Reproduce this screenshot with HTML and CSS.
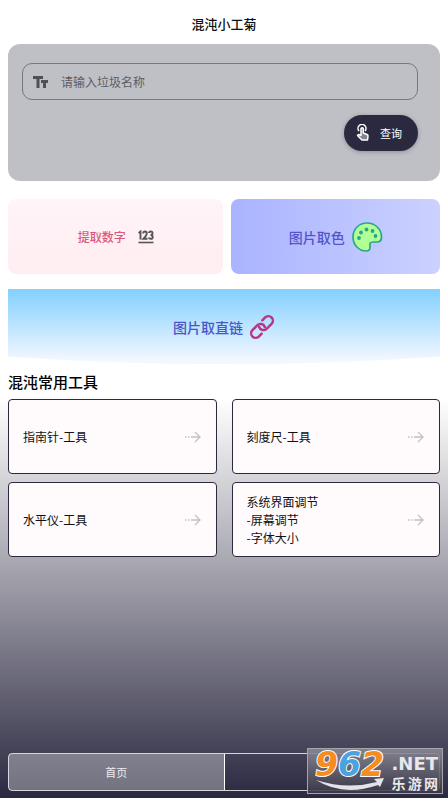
FILE: index.html
```html
<!DOCTYPE html>
<html lang="zh-CN">
<head>
<meta charset="utf-8">
<meta name="viewport" content="width=device-width, initial-scale=1">
<title>混沌小工菊</title>
<link rel="stylesheet" href="styles.css">
</head>
<body>
<svg class="defs" aria-hidden="true">
  <symbol id="arrow" viewBox="0 0 18 12">
    <path d="M1 6h1.500M4 6h1.500M7 6H16M11 1l5 5-5 5" fill="none" stroke="currentColor" stroke-width="1.300"/>
  </symbol>
</svg>
<header class="topbar"><h1>混沌小工菊</h1></header>
<main>
  <form class="search">
    <label class="field">
      <svg width="16" height="14" viewBox="0 0 16 14" aria-hidden="true"><path d="M0 1h10v3H6.500v9H3.500V4H0zM8 5h7v3h-2v5h-3V8H8z" fill="#505055"/></svg>
      <input type="text" placeholder="请输入垃圾名称" aria-label="请输入垃圾名称">
    </label>
    <button class="query" type="button">
      <svg width="14" height="18" viewBox="0 0 14 18" aria-hidden="true">
        <path d="M3 7a4 4 0 1 1 6 0" fill="none" stroke="#fff" stroke-width="1.500"/>
        <path d="M5 4.500q1.200-1.500 2.300 0V9l3.700 1.500q1.300.5 1 2L11.500 16H6l-4.500-4.500 1-1L5 11.500z" fill="#85838f" stroke="#fff" stroke-width="1.500" stroke-linejoin="round"/>
      </svg>
      查询
    </button>
  </form>
  <section class="features">
    <button class="feature pink" type="button">提取数字
      <svg width="16" height="14" viewBox="0 0 16 14" aria-hidden="true">
        <path d="M.5 3 2.500 1.500V9.500M5.200 3.500Q5.200 1.500 7 1.500T8.800 3.500Q8.800 5 5.500 8.700H9.500M11 3Q11 1.500 12.800 1.500T14.500 3.200Q14.500 5 12.500 5 14.700 5 14.700 7T12.800 8.800 11 7.500" fill="none" stroke="#555" stroke-width="1.900"/>
        <path d="M.5 12.500h15" stroke="#555" stroke-width="1.600"/>
      </svg>
    </button>
    <button class="feature indigo" type="button">图片取色
      <svg width="32" height="32" viewBox="0 0 32 32" aria-hidden="true">
        <path d="M16 2C8 2 2 8 2 16s6 14 13 14c3 0 4-1.500 4-3.500 0-3-1-5.500 3-5.500h4c3 0 4.500-2 4.500-5C30.500 8 24 2 16 2z" fill="#b2ff94" stroke="#22a892" stroke-width="1.700"/>
        <g fill="#22a892"><circle cx="8" cy="17" r="1.900"/><circle cx="10" cy="11.500" r="1.900"/><circle cx="15.500" cy="8.500" r="1.900"/><circle cx="21.500" cy="10" r="1.900"/><circle cx="24.500" cy="15" r="1.900"/></g>
      </svg>
    </button>
  </section>
  <button class="banner" type="button">图片取直链
    <svg width="26" height="26" viewBox="0 0 26 26" aria-hidden="true">
      <g transform="rotate(-45 13 13)" fill="none" stroke="#bc3585" stroke-width="2.500" stroke-linecap="round">
        <path d="M8 17.500H4a4.500 4.500 0 0 1 0-9h7a4.500 4.500 0 0 1 4 6.500"/>
        <path d="M18 8.500h4a4.500 4.500 0 0 1 0 9h-7a4.500 4.500 0 0 1-4-6.500"/>
      </g>
    </svg>
  </button>
  <h2>混沌常用工具</h2>
  <section class="tools">
    <button class="tool" type="button"><span>指南针-工具</span><svg width="18" height="12" aria-hidden="true"><use href="#arrow"/></svg></button>
    <button class="tool" type="button"><span>刻度尺-工具</span><svg width="18" height="12" aria-hidden="true"><use href="#arrow"/></svg></button>
    <button class="tool" type="button"><span>水平仪-工具</span><svg width="18" height="12" aria-hidden="true"><use href="#arrow"/></svg></button>
    <button class="tool" type="button"><span>系统界面调节<br>-屏幕调节<br>-字体大小</span><svg width="18" height="12" aria-hidden="true"><use href="#arrow"/></svg></button>
  </section>
</main>
<nav class="tabs">
  <button class="tab active" type="button">首页</button>
  <button class="tab" type="button"></button>
  <div class="watermark">
    <svg class="swoosh" width="72" height="14" viewBox="0 0 72 14" aria-hidden="true"><path d="M1 3Q32 13 62 5L59 2 69 1 65 10 63 8Q28 20 1 3z" fill="#e3e3e8"/></svg>
    <span class="digits">9<b>6</b>2</span>
    <span class="site"><span class="net">.NET</span><span class="cn"><i>乐</i><i>游</i><i>网</i></span></span>
  </div>
</nav>
</body>
</html>
```

FILE: styles.css
```css
* { box-sizing: border-box; }

body {
  margin: 0;
  padding: 0 8px 7px;
  min-height: 100vh;
  display: flex;
  flex-direction: column;
  font-family: "Noto Sans CJK SC", sans-serif;
  font-size: 12px;
  line-height: 18px;
  color: #111;
  background: linear-gradient(#fff 50%, #2b2940);
}

button, input { font: inherit; color: inherit; }
button { border: 0; padding: 0; cursor: pointer; }
.defs { position: absolute; width: 0; height: 0; }

.topbar {
  height: 44px;
  display: flex;
  align-items: center;
  justify-content: center;
  padding-top: 4px;
}
h1 { margin: 0; font-size: 13px; font-weight: 500; }

.search {
  display: flex;
  flex-direction: column;
  align-items: flex-end;
  gap: 15px;
  padding: 19px 22px 30px 14px;
  border-radius: 12px;
  background: #bfc0c6;
}
.field {
  width: 100%;
  height: 37px;
  display: flex;
  align-items: center;
  gap: 12px;
  padding: 0 10px;
  border: 1px solid #77787c;
  border-radius: 10px;
}
.field input {
  flex: 1;
  min-width: 0;
  border: 0;
  outline: 0;
  padding: 0;
  background: none;
}
.field input::placeholder { color: #5c5c62; opacity: 1; }
.query {
  height: 36px;
  display: flex;
  align-items: center;
  gap: 10px;
  padding: 0 16px 0 12px;
  border-radius: 18px;
  background: #2b2940;
  color: #fff;
  font-size: 11px;
  box-shadow: 0 1px 4px #2b294055;
}

.features {
  display: grid;
  grid-template-columns: 216fr 209fr;
  gap: 8px;
  margin: 18px 0 15px;
}
.feature {
  height: 75px;
  display: flex;
  align-items: center;
  justify-content: center;
  border-radius: 8px;
}
.pink {
  gap: 12px;
  background: linear-gradient(#fff4f8, #ffedf1);
  color: #dc5a82;
  font-weight: 500;
}
.indigo {
  gap: 6px;
  background: linear-gradient(90deg, #aab4ff, #cbd1ff);
  color: #5454cb;
  font-size: 14px;
  font-weight: 500;
}
.banner {
  width: 100%;
  height: 75px;
  display: flex;
  align-items: center;
  justify-content: center;
  gap: 6px;
  background: linear-gradient(#82d0ff, #f3f7ff 95%);
  clip-path: ellipse(115% 100% at 50% 0);
  color: #4a56c8;
  font-size: 14px;
  font-weight: 500;
}

h2 { margin: 8px 0 7px; font-size: 15px; line-height: 20px; font-weight: 500; color: #000; }

.tools {
  display: grid;
  grid-template-columns: 1fr 1fr;
  gap: 8px 15px;
}
.tool {
  height: 75px;
  display: flex;
  align-items: center;
  justify-content: space-between;
  padding: 0 14px 0 14px;
  border: 1px solid #2b2940;
  border-radius: 4px;
  background: #fffbfd;
  text-align: left;
}
.tool svg { color: #c3c1c6; }

.tabs {
  position: relative;
  display: flex;
  height: 38px;
  margin-top: auto;
  border: 1px solid #d5d5dc;
  border-radius: 4px;
}
.tab {
  flex: 1;
  background: none;
  color: #ededf2;
  font-size: 11px;
}
.active { background: #ffffff55; border-right: 1px solid #fff; }

.watermark {
  position: absolute;
  right: -4px;
  top: -6px;
  width: 136px;
  height: 46px;
  display: flex;
  justify-content: space-between;
  padding: 0 4px 0 7px;
  border: 1px solid #a5a4ad;
  background: linear-gradient(#8d8c97dd, #3b3948dd);
}
.digits {
  font: italic bold 33px/32px "DejaVu Sans", sans-serif;
  color: #f68b1f;
  -webkit-text-stroke: 2px #fff;
  paint-order: stroke fill;
}
.digits b { color: #4aa3df; }
.swoosh { position: absolute; left: 7px; bottom: 2px; }
.site {
  display: flex;
  flex-direction: column;
  gap: 2px;
  margin-top: 6px;
  color: #e8e8ec;
}
.net { font: bold 18px/18px "DejaVu Sans", sans-serif; }
.cn {
  display: flex;
  justify-content: space-between;
  font-size: 14px;
  line-height: 16px;
  font-weight: 700;
}
.cn i { font-style: normal; }
```
